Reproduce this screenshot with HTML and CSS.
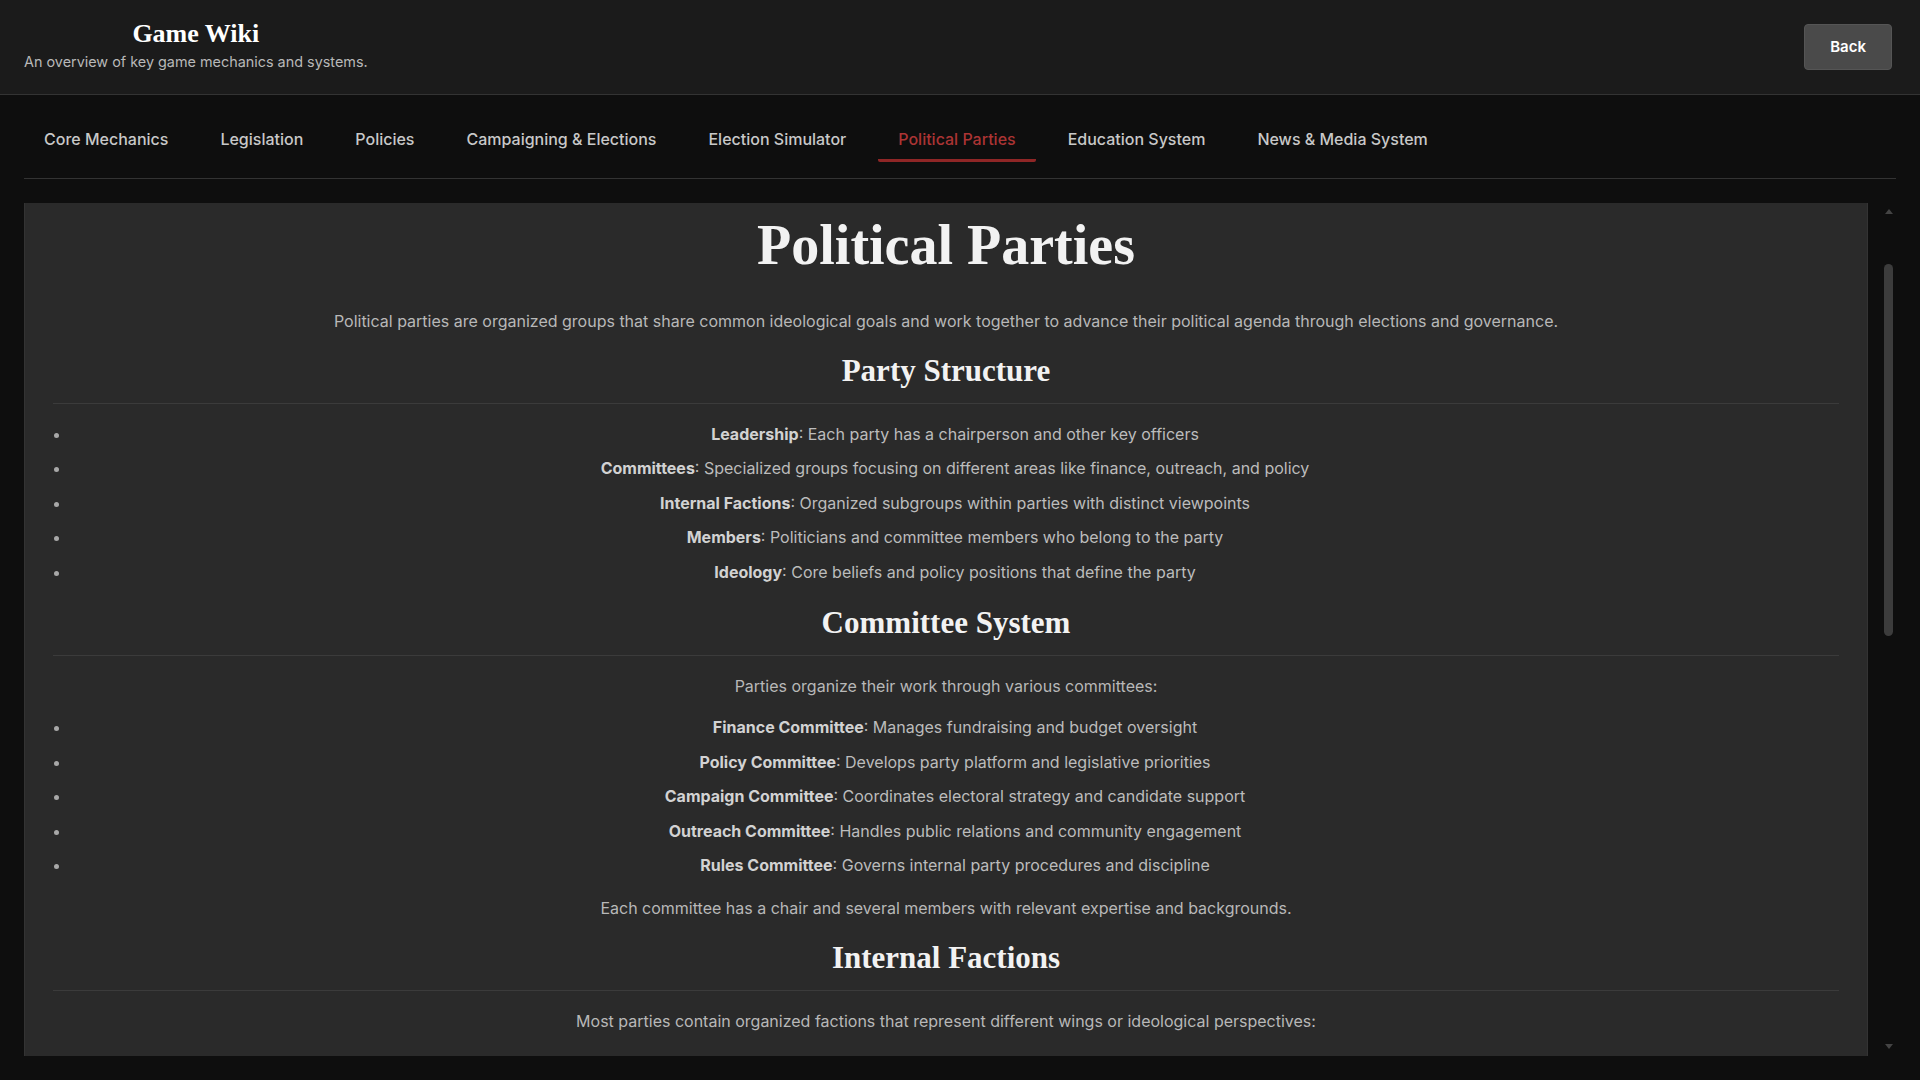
FILE: index.html
```html
<!DOCTYPE html>
<html lang="en">
<head>
<meta charset="utf-8">
<title>Game Wiki - Political Parties</title>
<link rel="stylesheet" href="styles.css">
</head>
<body>
<header class="topbar">
  <div class="brand">
    <h1 class="brand-title">Game Wiki</h1>
    <p class="brand-sub">An overview of key game mechanics and systems.</p>
  </div>
  <button class="back-btn" type="button">Back</button>
</header>
<main class="wiki">
  <nav class="tabs">
    <button class="tab" type="button">Core Mechanics</button>
    <button class="tab" type="button">Legislation</button>
    <button class="tab" type="button">Policies</button>
    <button class="tab" type="button">Campaigning &amp; Elections</button>
    <button class="tab" type="button">Election Simulator</button>
    <button class="tab active" type="button">Political Parties</button>
    <button class="tab" type="button">Education System</button>
    <button class="tab" type="button">News &amp; Media System</button>
  </nav>
  <div class="content-wrap">
    <div class="scroll-area" id="scrollArea">
      <article class="card">
        <h1 class="page-title">Political Parties</h1>
        <p>Political parties are organized groups that share common ideological goals and work together to advance their political agenda through elections and governance.</p>

        <h2>Party Structure</h2>
        <ul>
          <li><strong>Leadership</strong>: Each party has a chairperson and other key officers</li>
          <li><strong>Committees</strong>: Specialized groups focusing on different areas like finance, outreach, and policy</li>
          <li><strong>Internal Factions</strong>: Organized subgroups within parties with distinct viewpoints</li>
          <li><strong>Members</strong>: Politicians and committee members who belong to the party</li>
          <li><strong>Ideology</strong>: Core beliefs and policy positions that define the party</li>
        </ul>

        <h2>Committee System</h2>
        <p>Parties organize their work through various committees:</p>
        <ul>
          <li><strong>Finance Committee</strong>: Manages fundraising and budget oversight</li>
          <li><strong>Policy Committee</strong>: Develops party platform and legislative priorities</li>
          <li><strong>Campaign Committee</strong>: Coordinates electoral strategy and candidate support</li>
          <li><strong>Outreach Committee</strong>: Handles public relations and community engagement</li>
          <li><strong>Rules Committee</strong>: Governs internal party procedures and discipline</li>
        </ul>
        <p>Each committee has a chair and several members with relevant expertise and backgrounds.</p>

        <h2>Internal Factions</h2>
        <p>Most parties contain organized factions that represent different wings or ideological perspectives:</p>
        <ul class="factions">
          <li><strong>Progressive Wing</strong>: Advocates for reform and expanded public programs</li>
          <li><strong>Moderate Wing</strong>: Seeks compromise and broad electoral appeal</li>
          <li><strong>Conservative Wing</strong>: Emphasizes tradition and fiscal restraint</li>
          <li><strong>Populist Wing</strong>: Focuses on grassroots concerns and anti-establishment messaging</li>
        </ul>
        <p>Faction strength affects platform decisions, leadership elections, and candidate nominations.</p>

        <h2>Party Membership</h2>
        <p>Politicians can join, leave, or switch parties over the course of the game:</p>
        <ul>
          <li><strong>Joining</strong>: Requires ideological alignment with the party platform</li>
          <li><strong>Switching</strong>: Possible, but may damage reputation with voters and colleagues</li>
          <li><strong>Expulsion</strong>: Members who repeatedly break with the party can be removed</li>
        </ul>

        <h2>Party Influence</h2>
        <p>A party's strength in government depends on several factors:</p>
        <ul>
          <li><strong>Seats Held</strong>: The number of legislative seats controlled by party members</li>
          <li><strong>Public Approval</strong>: How favorably voters view the party and its leadership</li>
          <li><strong>Unity</strong>: How consistently members vote together on key legislation</li>
        </ul>

        <h2>Party Finances</h2>
        <p>Parties need funds to support their candidates and operations:</p>
        <ul>
          <li><strong>Donations</strong>: Contributions from members, supporters, and interest groups</li>
          <li><strong>Membership Dues</strong>: Regular fees paid by registered party members</li>
          <li><strong>Campaign Spending</strong>: Funds allocated to advertising and voter outreach</li>
          <li><strong>Reserves</strong>: Savings held for future election cycles</li>
        </ul>
      </article>
    </div>
    <div class="scrollbar" aria-hidden="true">
      <span class="sb-arrow sb-up"></span>
      <div class="sb-track"><div class="sb-thumb" id="sbThumb"></div></div>
      <span class="sb-arrow sb-down"></span>
    </div>
  </div>
</main>
<script src="script.js"></script>
</body>
</html>
```

FILE: styles.css
```css
*, *::before, *::after {
  box-sizing: border-box;
}

html, body {
  height: 100%;
}

body {
  margin: 0;
  background: #0e0e0e;
  color: #bcbcbc;
  font-family: Inter, "Noto Sans", "Liberation Sans", sans-serif;
  display: flex;
  flex-direction: column;
  overflow: hidden;
}

.topbar {
  flex-shrink: 0;
  height: 95px;
  display: flex;
  align-items: center;
  justify-content: space-between;
  padding: 0 28px 0 24px;
  background: #1b1b1b;
  border-bottom: 1px solid #333333;
}

.brand {
  display: flex;
  flex-direction: column;
  align-items: center;
  gap: 3px;
  margin-top: -4px;
}

.brand-title {
  margin: 0;
  font-family: "Liberation Serif", serif;
  font-weight: 700;
  font-size: 26px;
  line-height: 30px;
  color: #ffffff;
}

.brand-sub {
  margin: 0;
  font-size: 14.4px;
  line-height: 20px;
  color: #b8b8b8;
}

.back-btn {
  background: #4a4a4a;
  color: #ffffff;
  border: 1px solid #555555;
  border-radius: 4px;
  font-family: Inter, "Noto Sans", sans-serif;
  font-weight: 600;
  font-size: 15px;
  line-height: 20px;
  padding: 12px 25px;
}

.wiki {
  flex: 1;
  min-height: 0;
  display: flex;
  flex-direction: column;
  padding: 0 24px 24px;
}

.tabs {
  flex-shrink: 0;
  display: flex;
  gap: 12px;
  padding: 24px 0 16px;
  border-bottom: 1px solid #333333;
}

.tab {
  background: none;
  border: none;
  border-bottom: 3px solid transparent;
  border-radius: 2px;
  color: #c8c8c8;
  font-family: Inter, "Noto Sans", sans-serif;
  font-weight: 500;
  font-size: 16px;
  line-height: 20px;
  padding: 10px 20px 10px;
}

.tab.active {
  color: #ab3434;
  border-bottom-color: #8f2626;
}

.content-wrap {
  flex: 1;
  min-height: 0;
  margin-top: 24px;
  position: relative;
  display: flex;
}

.scroll-area {
  flex: 1;
  min-width: 0;
  margin-right: 28px;
  overflow-y: auto;
  scrollbar-width: none;
}

.scroll-area::-webkit-scrollbar {
  display: none;
}

.scrollbar {
  position: absolute;
  top: 0;
  right: 0;
  bottom: 0;
  width: 15px;
  display: flex;
  flex-direction: column;
  align-items: center;
}

.sb-arrow {
  flex: 0 0 15px;
  width: 15px;
  display: flex;
  justify-content: center;
}

.sb-arrow::before {
  content: "";
  width: 0;
  height: 0;
  border-left: 4.5px solid transparent;
  border-right: 4.5px solid transparent;
}

.sb-up::before {
  margin-top: 6px;
  border-bottom: 5px solid #444444;
}

.sb-down::before {
  margin-top: 3px;
  border-top: 5px solid #444444;
}

.sb-track {
  flex: 1;
  width: 15px;
  position: relative;
}

.sb-thumb {
  position: absolute;
  left: 3px;
  width: 9px;
  top: 46px;
  height: 371px;
  border-radius: 5px;
  background: #3c3c3c;
}

.card {
  background: #2a2a2a;
  border: 1px solid #333333;
  padding: 115px 28px 28px;
  text-align: center;
}

.page-title {
  margin: 0 0 32px;
  font-family: "Liberation Serif", serif;
  font-weight: 700;
  font-size: 56px;
  line-height: 64px;
  color: #f2f2f2;
}

.card h2 {
  margin: 20px 0 17.5px;
  padding-bottom: 14px;
  border-bottom: 1px solid #3b3b3b;
  font-family: "Liberation Serif", serif;
  font-weight: 700;
  font-size: 31px;
  line-height: 36px;
  color: #f2f2f2;
}

.card p {
  margin: 0 0 17.5px;
  font-size: 16px;
  line-height: 24px;
  color: #b8b8b8;
}

.card ul {
  margin: 0 0 17.5px;
  padding-left: 18px;
}

.card ul.factions {
  padding-top: 8px;
}

.card li {
  font-size: 16px;
  line-height: 25.5px;
  color: #bcbcbc;
}

.card li + li {
  margin-top: 9px;
}

.card li::marker {
  color: #a8a8a8;
}

.card strong {
  color: #d2d2d2;
  font-weight: 700;
}
```

FILE: script.js
```js
(function () {
  var area = document.getElementById('scrollArea');
  var thumb = document.getElementById('sbThumb');
  var track = thumb.parentElement;

  function update() {
    var trackH = track.clientHeight;
    var ratio = area.clientHeight / area.scrollHeight;
    var h = Math.max(24, trackH * ratio);
    var maxScroll = area.scrollHeight - area.clientHeight;
    var top = maxScroll > 0 ? (trackH - h) * area.scrollTop / maxScroll : 0;
    thumb.style.height = h + 'px';
    thumb.style.top = top + 'px';
  }

  area.scrollTop = 106;
  update();
  area.addEventListener('scroll', update);
})();
```
